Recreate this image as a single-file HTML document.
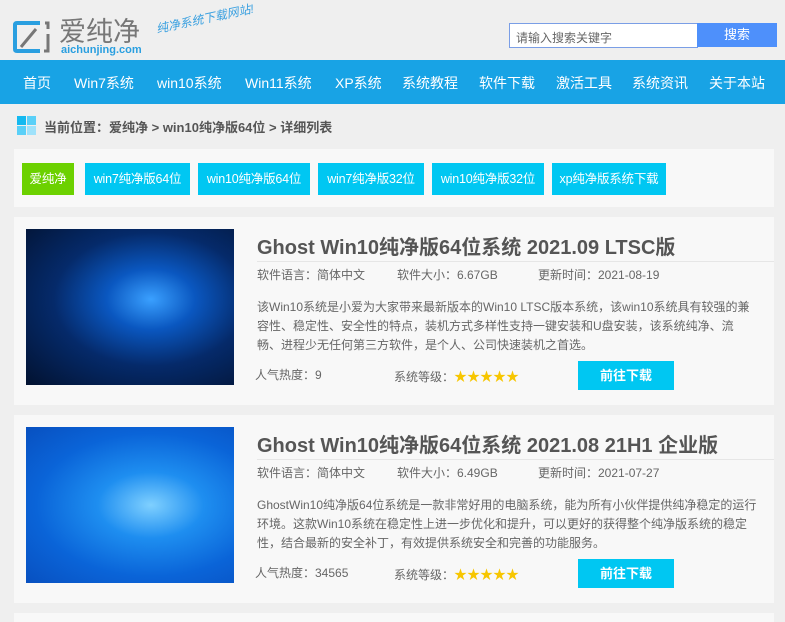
<!DOCTYPE html>
<html style="overflow:hidden;height:622px"><head><meta charset="utf-8"><style>
*{margin:0;padding:0;box-sizing:border-box}
body{width:785px;height:622px;overflow:hidden;background:#efefef;font-family:"Liberation Sans","Noto Sans CJK SC",sans-serif;position:relative;color:#555}
.a{position:absolute}
.nav{left:0;top:60px;width:785px;height:44px;background:#18a3e5}
.nav span{position:absolute;top:13px;color:#fff;font-size:14px;white-space:nowrap}
.tag{position:absolute;top:163px;height:32px;line-height:32px;color:#fff;font-size:12.5px;background:#00c7f2;text-align:center;white-space:nowrap;letter-spacing:-0.2px}
.card{left:14px;width:760px;height:188px;background:#f8f8f8}
.img{left:12px;top:12px;width:208px;height:156px;background:radial-gradient(ellipse at 60% 45%,#3aa0ff 0%,#0a57c0 25%,#052a6a 55%,#021230 100%)}
.title{left:243px;top:14px;font-size:20px;font-weight:bold;color:#555;white-space:nowrap}
.line{left:243px;top:44px;width:517px;height:1px;background:#e6e6e6}
.meta{top:49px;font-size:12px;color:#666;white-space:nowrap}
.desc{left:243px;top:81px;width:500px;font-size:12px;line-height:19px;color:#666}
.bot{top:149px;font-size:12px;color:#666;white-space:nowrap}
.star{color:#f7c600;font-size:13px}
.btn{left:564px;top:144px;width:96px;height:29px;background:#00c7f2;color:#fff;font-size:13px;font-weight:bold;text-align:center;line-height:29px}
</style></head><body>
<svg class="a" style="left:12px;top:20px" width="40" height="34" viewBox="0 0 40 34"><path d="M28 3H5Q3 3 3 5V29Q3 31 5 31H28" fill="none" stroke="#2a9fe0" stroke-width="4"/><path d="M9 27L24 9" stroke="#777" stroke-width="3"/><path d="M33 3H36V9M36 14V31H32" fill="none" stroke="#777" stroke-width="3"/></svg>
<div class="a" style="left:59px;top:10px;font-size:27px;color:#777">爱纯净</div>
<div class="a" style="left:61px;top:44px;font-size:11px;color:#2a9fe0;font-weight:bold">aichunjing.com</div>
<div class="a" style="left:158px;top:20px;font-size:12px;color:#3aa0e0;font-style:italic;transform:rotate(-12deg);transform-origin:left bottom">纯净系统下载网站!</div>
<div class="a" style="left:509px;top:23px;width:189px;height:25px;border:1px solid #7a9ee6;background:#fff;font-size:12px;color:#666;padding:5px 6px">请输入搜索关键字</div>
<div class="a" style="left:697px;top:23px;width:80px;height:24px;background:#4e90fb;color:#fff;font-size:13px;text-align:center;line-height:24px">搜索</div>
<div class="a nav">
<span style="left:23px">首页</span><span style="left:74px">Win7系统</span><span style="left:157px">win10系统</span><span style="left:245px">Win11系统</span><span style="left:335px">XP系统</span><span style="left:402px">系统教程</span><span style="left:479px">软件下载</span><span style="left:556px">激活工具</span><span style="left:632px">系统资讯</span><span style="left:709px">关于本站</span>
</div>
<svg class="a" style="left:17px;top:116px" width="19" height="19"><rect x="0" y="0" width="9" height="9" fill="#14b9f0"/><rect x="10" y="0" width="9" height="9" fill="#5ad0f8"/><rect x="0" y="10" width="9" height="9" fill="#5ad0f8"/><rect x="10" y="10" width="9" height="9" fill="#9fe2fb"/></svg>
<div class="a" style="left:44px;top:117px;font-size:13px;color:#555;font-weight:bold">当前位置：爱纯净 &gt; win10纯净版64位 &gt; 详细列表</div>
<div class="a" style="left:14px;top:149px;width:760px;height:58px;background:#f8f8f8"></div>
<div class="tag" style="left:22px;width:52px;background:#6cd100">爱纯净</div>
<div class="tag" style="left:85px;width:105px">win7纯净版64位</div>
<div class="tag" style="left:198px;width:112px">win10纯净版64位</div>
<div class="tag" style="left:318px;width:106px">win7纯净版32位</div>
<div class="tag" style="left:432px;width:112px">win10纯净版32位</div>
<div class="tag" style="left:552px;width:114px">xp纯净版系统下载</div>

<div class="a card" style="top:217px">
<div class="a img"></div>
<div class="a title">Ghost Win10纯净版64位系统 2021.09 LTSC版</div>
<div class="a line"></div>
<div class="a meta" style="left:243px">软件语言：简体中文</div>
<div class="a meta" style="left:383px">软件大小：6.67GB</div>
<div class="a meta" style="left:524px">更新时间：2021-08-19</div>
<div class="a desc">该Win10系统是小爱为大家带来最新版本的Win10 LTSC版本系统，该win10系统具有较强的兼容性、稳定性、安全性的特点，装机方式多样性支持一键安装和U盘安装，该系统纯净、流畅、进程少无任何第三方软件，是个人、公司快速装机之首选。</div>
<div class="a bot" style="left:241px">人气热度：9</div>
<div class="a bot" style="left:380px">系统等级：<span class="star">★★★★★</span></div>
<div class="a btn">前往下载</div>
</div>

<div class="a card" style="top:415px">
<div class="a img" style="background:radial-gradient(ellipse at 60% 50%,#7fd0ff 0%,#1e8ef0 30%,#0a64d8 65%,#0850c0 100%)"></div>
<div class="a title">Ghost Win10纯净版64位系统 2021.08 21H1 企业版</div>
<div class="a line"></div>
<div class="a meta" style="left:243px">软件语言：简体中文</div>
<div class="a meta" style="left:383px">软件大小：6.49GB</div>
<div class="a meta" style="left:524px">更新时间：2021-07-27</div>
<div class="a desc">GhostWin10纯净版64位系统是一款非常好用的电脑系统，能为所有小伙伴提供纯净稳定的运行环境。这款Win10系统在稳定性上进一步优化和提升，可以更好的获得整个纯净版系统的稳定性，结合最新的安全补丁，有效提供系统安全和完善的功能服务。</div>
<div class="a bot" style="left:241px">人气热度：34565</div>
<div class="a bot" style="left:380px">系统等级：<span class="star">★★★★★</span></div>
<div class="a btn">前往下载</div>
</div>
<div class="a" style="left:14px;top:613px;width:760px;height:9px;background:#f8f8f8"></div>
</body></html>
